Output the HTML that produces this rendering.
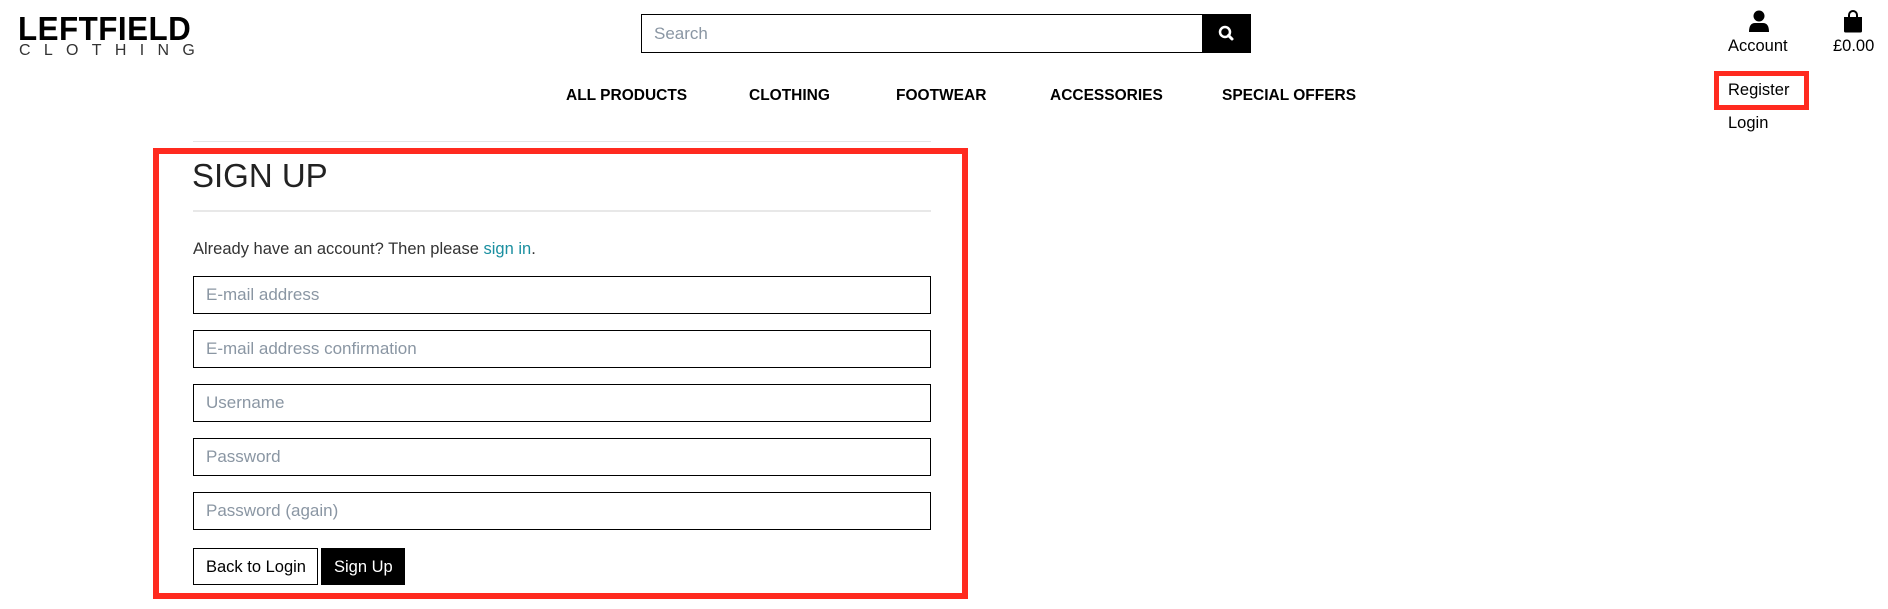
<!DOCTYPE html>
<html><head><meta charset="utf-8"><style>
*{box-sizing:border-box;margin:0;padding:0}
body{width:1888px;height:609px;background:#fff;font-family:"Liberation Sans",sans-serif;position:relative;overflow:hidden;color:#000}
.a{position:absolute}
.logo1{left:18px;top:12px;font-size:33px;font-weight:bold;letter-spacing:0.5px;line-height:34px;transform:scaleX(0.95);transform-origin:left}
.logo2{left:19px;top:43px;font-size:16px;letter-spacing:13.3px;line-height:16px;color:#333;font-weight:normal;-webkit-text-stroke:0}
.search{left:641px;top:14px;width:562px;height:39px;border:1px solid #000;font-size:17px;color:#8a96a3;padding:9px 12px}
.sbtn{left:1202px;top:14px;width:49px;height:39px;background:#000}
.nav{top:86px;font-size:15.5px;font-weight:bold;line-height:20px}
.t{font-size:16.5px;line-height:20px}
.in{position:absolute;left:193px;width:738px;height:38px;border:1.5px solid #000;font-size:17px;color:#8a96a3;padding:8px 12px}
</style></head><body>
<div class="a logo1">LEFTFIELD</div>
<div class="a logo2">CLOTHING</div>
<div class="a search">Search</div>
<div class="a sbtn"><svg width="49" height="39"><circle cx="23" cy="18" r="5" stroke="#fff" stroke-width="2.5" fill="none"/><line x1="26.5" y1="21.5" x2="30" y2="25" stroke="#fff" stroke-width="3" stroke-linecap="round"/></svg></div>
<div class="a nav" style="left:566px">ALL PRODUCTS</div>
<div class="a nav" style="left:749px">CLOTHING</div>
<div class="a nav" style="left:896px">FOOTWEAR</div>
<div class="a nav" style="left:1050px">ACCESSORIES</div>
<div class="a nav" style="left:1222px">SPECIAL OFFERS</div>
<svg class="a" style="left:1748px;top:10px" width="22" height="23"><circle cx="11" cy="6" r="5.5" fill="#000"/><path d="M1 22 Q1 13 7 13 L15 13 Q21 13 21 22 Z" fill="#000"/></svg>
<svg class="a" style="left:1843px;top:9px" width="20" height="24"><path d="M6 9 V6 a4 4 0 0 1 8 0 V9" stroke="#000" stroke-width="2" fill="none"/><path d="M1 8 H19 V22 a1.5 1.5 0 0 1 -1.5 1.5 H2.5 A1.5 1.5 0 0 1 1 22 Z" fill="#000"/></svg>
<div class="a t" style="left:1728px;top:36px">Account</div>
<div class="a t" style="left:1833px;top:36px">£0.00</div>
<div class="a" style="left:1714px;top:71px;width:95px;height:39px;border:5px solid #ff2a1f"></div>
<div class="a t" style="left:1728px;top:80px">Register</div>
<div class="a t" style="left:1728px;top:113px">Login</div>
<div class="a" style="left:193px;top:141px;width:738px;height:1px;background:#e4e4e4"></div>
<div class="a" style="left:153px;top:148px;width:815px;height:451px;border:6px solid #ff2a1f"></div>
<div class="a" style="left:192px;top:157px;font-size:33px;color:#222;line-height:38px">SIGN UP</div>
<div class="a" style="left:193px;top:210px;width:738px;height:2px;background:#e8e8e8"></div>
<div class="a t" style="left:193px;top:239px;color:#333">Already have an account? Then please <span style="color:#1a8fa0">sign in</span>.</div>
<div class="in" style="top:276px">E-mail address</div>
<div class="in" style="top:330px">E-mail address confirmation</div>
<div class="in" style="top:384px">Username</div>
<div class="in" style="top:438px">Password</div>
<div class="in" style="top:492px">Password (again)</div>
<div class="a t" style="left:193px;top:548px;width:125px;height:37px;border:1.5px solid #000;padding:8px 0 0 12px">Back to Login</div>
<div class="a t" style="left:321px;top:548px;width:84px;height:37px;background:#000;color:#fff;padding:9px 0 0 13px">Sign Up</div>
</body></html>
